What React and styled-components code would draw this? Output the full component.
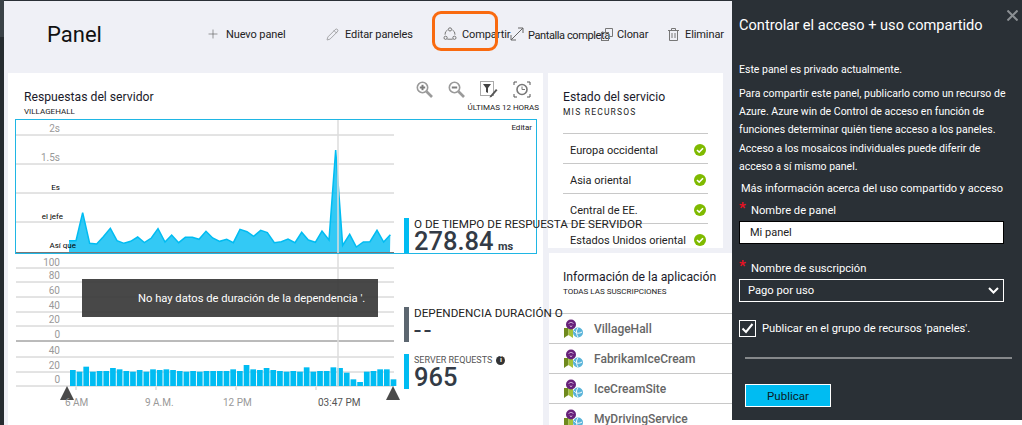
import React from "react";
import { styled, createGlobalStyle } from "styled-components";
import { Plus, Pencil } from "lucide-react";

const FONT = `Roboto, "Open Sans", "Liberation Sans", sans-serif`;

const areaPoints = [
  [207, 362], [228, 362], [248, 278], [269, 370], [290, 372], [310, 350], [331, 325], [351, 362],
  [372, 370], [392, 364], [413, 351], [433, 368], [454, 354], [474, 326], [495, 366], [515, 345],
  [536, 368], [556, 352], [577, 352], [597, 358], [618, 334], [638, 354], [659, 364], [680, 358],
  [700, 368], [720, 328], [741, 335], [761, 349], [782, 331], [802, 338], [823, 368], [844, 365],
  [864, 357], [885, 368], [905, 337], [925, 360], [946, 367], [966, 333], [987, 360], [1007, 90],
  [1028, 376], [1049, 343], [1069, 381], [1090, 366], [1110, 365], [1131, 331], [1151, 366], [1171, 344],
].map(([x, y]) => [x / 3, 120 + y / 3]);

const barTops = [
  330, 335, 320, 335, 333, 333, 324, 328, 333, 335, 330, 335, 328, 330, 328, 330, 333,
  335, 333, 335, 333, 333, 333, 333, 328, 333, 315, 328, 330, 324, 330, 333, 335, 333,
  335, 322, 335, 333, 333, 322, 324, 338, 358, 366, 335, 333, 328, 328, 358,
];

const services = ["Europa occidental", "Asia oriental", "Central de EE.", "Estados Unidos oriental"];
const apps = ["VillageHall", "FabrikamIceCream", "IceCreamSite", "MyDrivingService"];

function ShareIcon() {
  return (
    <svg width="14" height="14" viewBox="0 0 14 14" fill="none" stroke="#777" strokeWidth="1">
      <path d="M4.600 2.900a5 5 0 0 0-2.600 4.800M9.400 2.900a5 5 0 0 1 2.600 4.800M4.300 12.200h5.400" />
      <circle cx="7" cy="2.400" r="1.600" />
      <circle cx="2.600" cy="10.800" r="1.600" />
      <circle cx="11.400" cy="10.800" r="1.600" />
    </svg>
  );
}

function ExpandIcon() {
  return (
    <svg width="14" height="14" viewBox="0 0 14 14" fill="none" stroke="#666" strokeWidth="1">
      <path d="M1 13 13 1M8 1h5v5M1 8v5h5" />
    </svg>
  );
}

function CloneIcon() {
  return (
    <svg width="12" height="13" viewBox="0 0 12 13" fill="none" stroke="#777" strokeWidth="1">
      <path d="M4.500 4V.5h7v8H8" />
      <rect x="0.500" y="4.500" width="7" height="8" />
    </svg>
  );
}

function TrashIcon() {
  return (
    <svg width="11" height="13" viewBox="0 0 11 13" fill="none" stroke="#777" strokeWidth="1">
      <path d="M0 2.500h11M3.500 2.500V.5h4v2M1.500 2.500v10h8v-10M4 5v5M7 5v5" />
    </svg>
  );
}

function ZoomIcon({ plus }) {
  return (
    <svg width="17" height="17" viewBox="0 0 17 17" fill="none" stroke="#9a9a9a" strokeWidth="2">
      <circle cx="6.500" cy="6.500" r="5.200" strokeWidth="1.600" />
      <path d="m10.500 10.500 5.500 5.500" strokeWidth="2.600" />
      <path d="M3.800 6.500h5.400" stroke="#7d7d7d" />
      {plus && <path d="M6.500 3.800v5.400" stroke="#7d7d7d" />}
    </svg>
  );
}

function FilterIcon() {
  return (
    <svg width="18" height="17" viewBox="0 0 18 17" fill="none">
      <rect x="0.500" y="0.500" width="13" height="14" stroke="#aaa" />
      <path d="M3 3h8L8 7v5L6 11V7z" fill="#444" />
      <path d="m10 15 6-7 1.500 1.200-6 6.800-2 .6z" fill="#555" />
    </svg>
  );
}

function TimeIcon() {
  return (
    <svg width="18" height="17" viewBox="0 0 18 17" fill="none" stroke="#555">
      <path d="M1 4V1h3M14 1h3v3M1 13v3h3M14 16h3v-3" />
      <circle cx="9" cy="8.500" r="5" strokeWidth="1.600" stroke="#777" />
      <path d="M9 5.500v3h3" stroke="#777" />
    </svg>
  );
}

function OkIcon() {
  return (
    <svg width="12" height="12" viewBox="0 0 12 12">
      <circle cx="6" cy="6" r="6" fill="#7fba00" />
      <path d="m3 6 2.200 2.200L9 4.200" fill="none" stroke="#fff" strokeWidth="1.600" />
    </svg>
  );
}

function AppIcon() {
  return (
    <svg width="19" height="19" viewBox="0 0 19 19">
      <path d="M0 9h4.500v7L2 17.500 0 19z" fill="#6f8a1e" />
      <path d="M4.500 9H9v10l-4.500-3z" fill="#a4c03a" />
      <circle cx="7" cy="5.500" r="5" fill="#68217a" />
      <path d="M4.500 4.500a3.500 3.500 0 0 1 5 0M6 6.500l1 1.500 1-1.500" fill="none" stroke="#c9a6d3" strokeWidth="1" />
      <circle cx="14" cy="13.500" r="5" fill="#59b4d9" />
      <path d="M10 12c2 2.500 5 3 8 1M14 9c-2 2-2 6 0 9" fill="none" stroke="#fff" strokeWidth="1" />
    </svg>
  );
}

function Grid({ lines, from = 16 }) {
  return lines.map((y) => <GridLine key={y} x1={from} x2={394} y1={y} y2={y} />);
}

function ResponsePlot() {
  const pts = areaPoints.map((p) => p.join(",")).join(" ");
  return (
    <PlotSvg width="388" height="133" viewBox="16 120 388 133">
      <Grid lines={[135, 164, 193, 222]} />
      <polygon points={`69,252 ${pts} 390,252`} fill="#00bcf2" opacity="0.8" />
      <polyline points={pts} fill="none" stroke="#00bcf2" strokeWidth="1.500" />
      <GridLine x1="16" x2="394" y1="252.500" y2="252.500" $dark />
      <CursorLine x1="338" x2="338" y1="120" y2="253" />
      <AxisText x="60" y="132">2s</AxisText>
      <AxisText x="60" y="161">1.5s</AxisText>
      <AxisText x="60" y="190" $black>Es</AxisText>
      <AxisText x="63" y="219" $black>el jefe</AxisText>
      <AxisText x="76" y="248" $black>Así que</AxisText>
    </PlotSvg>
  );
}

function DependencyPlot() {
  return (
    <PlotSvg width="388" height="88" viewBox="16 254 388 88">
      <Grid lines={[268, 282, 297, 312, 326]} />
      <GridLine x1="16" x2="394" y1="341" y2="341" $dark />
      <CursorLine x1="338" x2="338" y1="254" y2="342" />
      <AxisText x="60" y="266">100</AxisText>
      <AxisText x="60" y="279">80</AxisText>
      <AxisText x="60" y="294">60</AxisText>
      <AxisText x="60" y="309">40</AxisText>
      <AxisText x="60" y="323">20</AxisText>
      <AxisText x="60" y="338">0</AxisText>
    </PlotSvg>
  );
}

function RequestsPlot() {
  return (
    <PlotSvg width="388" height="72" viewBox="16 342 388 72">
      <Grid lines={[357, 372, 386]} />
      {barTops.map((t, i) => (
        <rect key={i} x={70 + i * 6.68} y={260 + t / 3} width="5.700" height={(378 - t) / 3} fill="#00bcf2" />
      ))}
      <CursorLine x1="338" x2="338" y1="342" y2="386" />
      <AxisText x="60" y="354">40</AxisText>
      <AxisText x="60" y="369">20</AxisText>
      <AxisText x="60" y="383">0</AxisText>
      {[76, 156, 236, 316].map((x) => (
        <GridLine key={x} x1={x} x2={x} y1="387" y2="390" />
      ))}
      <polygon points="60,400 67,386 74,400" fill="#4a4a4a" />
      <polygon points="386,400 393,386 400,400" fill="#4a4a4a" />
      <AxisText x="65" y="406" $start>6 AM</AxisText>
      <AxisText x="145" y="406" $start>9 A.M.</AxisText>
      <AxisText x="223" y="406" $start>12 PM</AxisText>
      <AxisText x="318" y="406" $start $dark>03:47 PM</AxisText>
    </PlotSvg>
  );
}

export default function App() {
  return (
    <>
      <GlobalStyle />
      <Page>
        <Rail />
        <Dashboard>
          <Header>
            <Title>Panel</Title>
            <Commands>
              <Command $w={120}>
                <Plus size={14} strokeWidth={1} color="#555" />
                <span>Nuevo panel</span>
              </Command>
              <Command $w={117}>
                <Pencil size={13} strokeWidth={1} color="#666" />
                <span>Editar paneles</span>
              </Command>
              <Command $w={67} $gap={5}>
                <Highlight />
                <ShareIcon />
                <span>Compartir</span>
              </Command>
              <Command $w={91} $gap={4}>
                <ExpandIcon />
                <FullLabel>Pantalla completa</FullLabel>
              </Command>
              <Command $w={67} $gap={4}>
                <CloneIcon />
                <span>Clonar</span>
              </Command>
              <Command $w={55} $gap={6}>
                <TrashIcon />
                <span>Eliminar</span>
              </Command>
            </Commands>
          </Header>
          <Tiles>
            <ChartTile>
              <ChartHead>
                <div>
                  <TileTitle>Respuestas del servidor</TileTitle>
                  <TileSub>VILLAGEHALL</TileSub>
                </div>
                <ChartTools>
                  <ToolRow>
                    <ZoomIcon plus />
                    <ZoomIcon />
                    <FilterIcon />
                    <TimeIcon />
                  </ToolRow>
                  <TileSub>ÚLTIMAS 12 HORAS</TileSub>
                </ChartTools>
              </ChartHead>
              <SelectedRow>
                <ResponsePlot />
                <Metric>
                  <MetricBar />
                  <div>
                    <MetricLabel>O DE TIEMPO DE RESPUESTA DE SERVIDOR</MetricLabel>
                    <MetricValue>
                      278.84 <small>ms</small>
                    </MetricValue>
                  </div>
                </Metric>
                <EditLink>Editar</EditLink>
              </SelectedRow>
              <ChartRow>
                <DependencyPlot />
                <NoData>No hay datos de duración de la dependencia '.</NoData>
                <Metric>
                  <MetricBar $color="#5c6670" />
                  <div>
                    <MetricLabel>DEPENDENCIA DURACIÓN O</MetricLabel>
                    <MetricValue $dashes>--</MetricValue>
                  </div>
                </Metric>
              </ChartRow>
              <ChartRow>
                <RequestsPlot />
                <Metric $top>
                  <MetricBar />
                  <div>
                    <MetricLabel $small>
                      SERVER REQUESTS <InfoDot>i</InfoDot>
                    </MetricLabel>
                    <MetricValue>965</MetricValue>
                  </div>
                </Metric>
              </ChartRow>
            </ChartTile>
            <SideColumn>
              <ServiceTile>
                <TileTitle>Estado del servicio</TileTitle>
                <TileSub $wide>MIS RECURSOS</TileSub>
                <ServiceList>
                  {services.map((name) => (
                    <ServiceRow key={name}>
                      <span>{name}</span>
                      <OkIcon />
                    </ServiceRow>
                  ))}
                </ServiceList>
              </ServiceTile>
              <AppsTile>
                <TileTitle>Información de la aplicación</TileTitle>
                <TileSub>TODAS LAS SUSCRIPCIONES</TileSub>
                <AppList>
                  {apps.map((name) => (
                    <AppRow key={name}>
                      <AppIcon />
                      <span>{name}</span>
                    </AppRow>
                  ))}
                </AppList>
              </AppsTile>
            </SideColumn>
          </Tiles>
        </Dashboard>
        <Blade>
          <CloseX>
            <svg width="11" height="11" viewBox="0 0 11 11" stroke="#8b8f93" strokeWidth="2">
              <path d="m.5.5 10 10M10.500.5l-10 10" />
            </svg>
          </CloseX>
          <BladeTitle>Controlar el acceso + uso compartido</BladeTitle>
          <Intro>Este panel es privado actualmente.</Intro>
          <Para $first>
            Para compartir este panel, publicarlo como un recurso de
            <br />
            Azure. Azure win de Control de acceso en función de
            <br />
            funciones determinar quién tiene acceso a los paneles.
          </Para>
          <Para>
            Acceso a los mosaicos individuales puede diferir de
            <br />
            acceso a sí mismo panel.
          </Para>
          <MoreLink>Más información acerca del uso compartido y acceso</MoreLink>
          <FieldLabel>Nombre de panel</FieldLabel>
          <TextField>Mi panel</TextField>
          <FieldLabel $spaced>Nombre de suscripción</FieldLabel>
          <SelectField>
            <span>Pago por uso</span>
            <svg width="11" height="7" viewBox="0 0 11 7" fill="none" stroke="#fff" strokeWidth="2">
              <path d="m1 1 4.500 4.500L10 1" />
            </svg>
          </SelectField>
          <CheckRow>
            <CheckBox>
              <svg width="13" height="11" viewBox="0 0 13 11" fill="none" stroke="#fff" strokeWidth="2">
                <path d="m1.500 5.500 3.500 3.500 6.500-8" />
              </svg>
            </CheckBox>
            <span>Publicar en el grupo de recursos 'paneles'.</span>
          </CheckRow>
          <Divider />
          <PublishButton>Publicar</PublishButton>
        </Blade>
      </Page>
    </>
  );
}

const GlobalStyle = createGlobalStyle`
  html, body {
    margin: 0;
    padding: 0;
    background: #fff;
    font-family: ${FONT};
  }
`;

const Page = styled.div`
  display: flex;
  width: 1022px;
  height: 425px;
  overflow: hidden;
  color: #111;
`;

const Rail = styled.div`
  flex: 0 0 4px;
  background: linear-gradient(#3a4247 37px, #262c30 37px);
`;

const Dashboard = styled.div`
  flex: 0 0 728px;
  min-width: 0;
  display: flex;
  flex-direction: column;
  background: #eff0f6;
  border-top: 1px solid #2a3036;
  box-sizing: border-box;
`;

const Header = styled.header`
  flex: 0 0 72px;
  display: flex;
  align-items: flex-start;
  padding-left: 43px;
`;

const Title = styled.h1`
  flex: 0 0 159px;
  margin: 18px 0 0;
  font-size: 22px;
  line-height: 32px;
  font-weight: 400;
  color: #111;
`;

const Commands = styled.nav`
  flex: 1;
  min-width: 0;
  display: flex;
  margin-top: 24px;
`;

const Command = styled.div`
  position: relative;
  flex: 0 0 ${(p) => p.$w}px;
  min-width: 0;
  display: flex;
  align-items: center;
  gap: ${(p) => p.$gap ?? 6}px;
  height: 18px;
  font-size: 11px;
  letter-spacing: -0.1px;
  white-space: nowrap;
  color: #222;

  svg {
    flex: none;
  }
`;

const FullLabel = styled.span`
  margin-top: 3px;
  letter-spacing: -0.4px;
`;

const Highlight = styled.div`
  position: absolute;
  left: -11px;
  top: -14px;
  width: 60px;
  height: 34px;
  border: 3px solid #f96a0f;
  border-radius: 9px;
`;

const Tiles = styled.div`
  flex: 1;
  min-height: 0;
  display: flex;
  gap: 5px;
  padding-left: 4px;
`;

const ChartTile = styled.section`
  position: relative;
  z-index: 1;
  flex: 0 0 535px;
  min-width: 0;
  box-sizing: border-box;
  background: #fff;
  padding: 0 6px 0 7px;
`;

const ChartHead = styled.div`
  height: 46px;
  box-sizing: border-box;
  padding: 15px 0 0 9px;
  display: flex;
  justify-content: space-between;
`;

const ChartTools = styled.div`
  display: flex;
  flex-direction: column;
  align-items: flex-end;
  margin: -7px -2px 0 0;
`;

const ToolRow = styled.div`
  display: flex;
  gap: 15px;
  margin: 0 8px 4px 0;
`;

const TileTitle = styled.h2`
  margin: 0;
  font-size: 12.200px;
  line-height: 18px;
  font-weight: 400;
  white-space: nowrap;
  color: #1a1a2a;
`;

const TileSub = styled.div`
  margin-top: 1px;
  font-size: ${(p) => (p.$wide ? 8.5 : 8)}px;
  letter-spacing: ${(p) => (p.$wide ? 1.200 : 0)}px;
  line-height: 10px;
  white-space: nowrap;
  color: #222;
`;

const ChartRow = styled.div`
  position: relative;
  display: flex;
  align-items: flex-start;
  margin-left: 1px;
`;

const SelectedRow = styled(ChartRow)`
  margin-left: 0;
  height: 135px;
  box-sizing: border-box;
  border: 1px solid #1fb6e4;
`;

const PlotSvg = styled.svg`
  flex: none;
  display: block;
  font-family: ${FONT};
`;

const GridLine = styled.line`
  stroke: ${(p) => (p.$dark ? "#777" : "#c8c8c8")};
  stroke-width: 1;
`;

const CursorLine = styled.line`
  stroke: #dcdcdc;
  stroke-width: 1.500;
`;

const AxisText = styled.text`
  font-size: ${(p) => (p.$black ? 8 : 10)}px;
  text-anchor: ${(p) => (p.$start ? "start" : "end")};
  fill: ${(p) => (p.$black ? "#000" : p.$dark ? "#555" : "#999")};
`;

const EditLink = styled.div`
  position: absolute;
  top: 3px;
  right: 4px;
  font-size: 8px;
  color: #222;
`;

const NoData = styled.div`
  position: absolute;
  left: 66px;
  top: 25px;
  z-index: 1;
  width: 296px;
  height: 38px;
  box-sizing: border-box;
  padding-left: 56px;
  display: flex;
  align-items: center;
  font-size: 11.200px;
  white-space: nowrap;
  color: #fff;
  background: rgba(52, 52, 52, 0.9);
`;

const Metric = styled.div`
  flex: none;
  align-self: ${(p) => (p.$top ? "flex-start" : "flex-end")};
  margin-top: ${(p) => (p.$top ? 12 : 0)}px;
  display: flex;
  gap: 5px;
  height: 35px;
`;

const MetricBar = styled.div`
  flex: 0 0 5px;
  background: ${(p) => p.$color ?? "#00bcf2"};
`;

const MetricLabel = styled.div`
  display: flex;
  align-items: center;
  gap: 4px;
  height: 12px;
  font-size: ${(p) => (p.$small ? 9 : 11.700)}px;
  white-space: nowrap;
  color: ${(p) => (p.$small ? "#555" : "#222")};
`;

const MetricValue = styled.div`
  font-size: 25.500px;
  line-height: 22px;
  font-weight: ${(p) => (p.$dashes ? 400 : 500)};
  letter-spacing: ${(p) => (p.$dashes ? 3 : 0)}px;
  color: #333b46;
  white-space: nowrap;

  small {
    margin-left: -2px;
    font-size: 11px;
    font-weight: 700;
    letter-spacing: 0;
  }
`;

const InfoDot = styled.span`
  display: inline-flex;
  align-items: center;
  justify-content: center;
  width: 9px;
  height: 9px;
  border-radius: 50%;
  background: #333;
  color: #fff;
  font-size: 7px;
  font-weight: 700;
`;

const SideColumn = styled.div`
  flex: 1;
  min-width: 0;
  display: flex;
  flex-direction: column;
  gap: 5px;
`;

const ServiceTile = styled.section`
  flex: 0 0 175px;
  width: 175px;
  box-sizing: border-box;
  overflow: hidden;
  background: #fff;
  padding: 15px 15px 0;
`;

const ServiceList = styled.ul`
  list-style: none;
  margin: 16px 0 0;
  padding: 0;
`;

const ServiceRow = styled.li`
  display: flex;
  justify-content: space-between;
  align-items: center;
  height: 30px;
  box-sizing: border-box;
  padding: 3px 2px 0 7px;
  border-top: 1px solid #c8c8c8;
  font-size: 11px;
  white-space: nowrap;
  color: #222;
`;

const AppsTile = styled.section`
  flex: 1;
  margin-left: 1px;
  background: #fff;
  padding-top: 15px;
  padding-left: 14px;
  overflow: hidden;
`;

const AppList = styled.ul`
  list-style: none;
  margin: 16px 0 0 -14px;
  padding: 0;
`;

const AppRow = styled.li`
  display: flex;
  align-items: center;
  gap: 11px;
  height: 30px;
  box-sizing: border-box;
  padding-left: 15px;
  border-top: 1px solid #c8c8c8;
  font-size: 12px;
  font-weight: 500;
  color: #666;
`;

const Blade = styled.aside`
  position: relative;
  flex: 0 0 290px;
  height: 420px;
  box-sizing: border-box;
  padding: 14px 0 0 7px;
  background: #2a3036;
  color: #fff;
`;

const CloseX = styled.div`
  position: absolute;
  top: 6px;
  right: 4px;
`;

const BladeTitle = styled.h2`
  margin: 0;
  font-size: 14.600px;
  line-height: 22px;
  font-weight: 400;
  white-space: nowrap;
`;

const Intro = styled.p`
  margin: 27px 0 0;
  font-size: 10.500px;
  line-height: 14px;
`;

const Para = styled.p`
  margin: ${(p) => (p.$first ? 8 : 1)}px 0 0;
  font-size: 10.500px;
  line-height: 18px;
  white-space: nowrap;
`;

const MoreLink = styled.div`
  margin: 4px 0 0 2px;
  font-size: 11px;
  line-height: 18px;
  white-space: nowrap;
`;

const FieldLabel = styled.label`
  display: block;
  position: relative;
  margin: ${(p) => (p.$spaced ? 17 : 5)}px 0 2px 12px;
  font-size: 11.200px;
  line-height: 16px;
  white-space: nowrap;

  &::before {
    content: "*";
    position: absolute;
    left: -12px;
    top: -3px;
    color: #e81123;
    font-size: 15px;
    font-weight: 700;
  }
`;

const TextField = styled.div`
  width: 265px;
  height: 23px;
  box-sizing: border-box;
  padding-left: 10px;
  display: flex;
  align-items: center;
  background: #fff;
  border: 1px solid #000;
  color: #222;
  font-size: 11px;
`;

const SelectField = styled.div`
  width: 265px;
  height: 23px;
  box-sizing: border-box;
  padding: 0 4px 0 8px;
  display: flex;
  align-items: center;
  justify-content: space-between;
  border: 1px solid #fff;
  font-size: 11.200px;
`;

const CheckRow = styled.div`
  display: flex;
  align-items: center;
  gap: 6px;
  margin-top: 18px;
  font-size: 11.200px;
  white-space: nowrap;
`;

const CheckBox = styled.div`
  flex: 0 0 17px;
  height: 17px;
  box-sizing: border-box;
  border: 1px solid #fff;
  display: flex;
  align-items: center;
  justify-content: center;
`;

const Divider = styled.div`
  width: 267px;
  height: 2px;
  margin: 20px 0 0 6px;
  background: #85888b;
`;

const PublishButton = styled.button`
  display: block;
  width: 86px;
  height: 23px;
  margin: 25px 0 0 6px;
  padding: 0;
  border: 1px solid #fff;
  background: #00bcf2;
  color: #0a1a24;
  font-family: ${FONT};
  font-size: 11.500px;
`;
